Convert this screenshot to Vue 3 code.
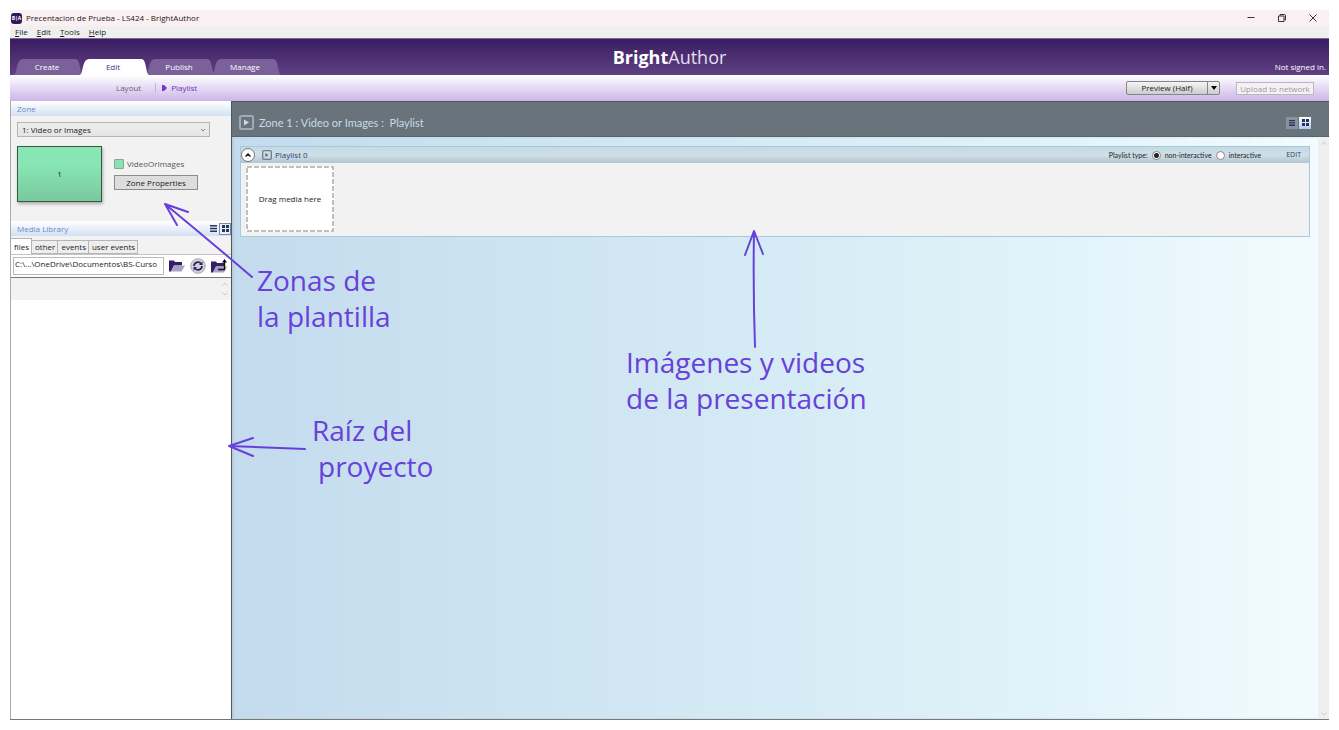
<script setup>
import { ref } from 'vue'

const menus = ['File', 'Edit', 'Tools', 'Help']
const tabs = ['Create', 'Edit', 'Publish', 'Manage']
const libraryTabs = ['files', 'other', 'events', 'user events']
const activeTab = ref('Edit')
const activeLibraryTab = ref('files')
const zone = ref('1')
const playlistType = ref('non-interactive')
const folder = ref('C:\\...\\OneDrive\\Documentos\\BS-Curso')
</script>

<template>
  <div class="page">
    <div class="window">
      <header class="titlebar">
        <span class="app-icon">B|A</span>
        <span class="title">Precentacion de Prueba - LS424 - BrightAuthor</span>
        <div class="window-buttons">
          <button type="button" aria-label="Minimize">
            <svg width="10" height="10" viewBox="0 0 10 10"><path d="M1.5 4.500h7" /></svg>
          </button>
          <button type="button" aria-label="Restore">
            <svg width="10" height="10" viewBox="0 0 10 10"><path d="M1.500 3h5.500v5.500H1.500zM3 2.800V1.500h4.200q1.300 0 1.300 1.300V7H7.300" /></svg>
          </button>
          <button type="button" aria-label="Close">
            <svg width="10" height="10" viewBox="0 0 10 10"><path d="M1.500 1.500l7 7M8.500 1.500l-7 7" /></svg>
          </button>
        </div>
      </header>

      <nav class="menubar" aria-label="Menu">
        <button v-for="menu in menus" :key="menu" type="button"><u>{{ menu[0] }}</u>{{ menu.slice(1) }}</button>
      </nav>

      <div class="banner">
        <nav class="tabs" aria-label="Sections">
          <button
            v-for="tab in tabs"
            :key="tab"
            type="button"
            :class="{ active: tab === activeTab }"
            @click="activeTab = tab"
          >
            <svg viewBox="0 0 70 16" preserveAspectRatio="none" aria-hidden="true">
              <path d="M0 16C3 16 3 11 4.500 6Q6 0 10 0H62Q65 0 66 4C67.500 9 68 16 70 16Z" />
            </svg>
            <span>{{ tab }}</span>
          </button>
        </nav>
        <h1 class="brand"><b>Bright</b>Author</h1>
        <span class="signed">Not signed in.</span>
      </div>

      <div class="toolbar">
        <a class="crumb" href="#layout">Layout</a>
        <a class="crumb current" href="#playlist">
          <svg width="5" height="6" viewBox="0 0 5 6"><path d="M0 0h2l3 3-3 3H0z" /></svg>
          Playlist
        </a>
        <div class="actions">
          <div class="split">
            <button type="button" class="preview">Preview (Half)</button>
            <button type="button" class="drop" aria-label="Preview options">
              <svg width="6" height="4" viewBox="0 0 6 4"><path d="M0 0h6L3 4z" /></svg>
            </button>
          </div>
          <button type="button" class="upload" disabled>Upload to network</button>
        </div>
      </div>

      <div class="workspace">
        <aside class="sidebar">
          <h2 class="panel-title">Zone</h2>
          <div class="zone-panel">
            <div class="select-wrap">
              <select v-model="zone" aria-label="Zone">
                <option value="1">1: Video or Images</option>
              </select>
              <svg width="6" height="4" viewBox="0 0 6 4"><path d="M1 1l2 2 2-2" /></svg>
            </div>
            <div class="zone-row">
              <div class="zone-preview">1</div>
              <div class="zone-info">
                <div class="legend"><i></i>VideoOrImages</div>
                <button type="button">Zone Properties</button>
              </div>
            </div>
          </div>

          <div class="panel-title library-title">
            <h2>Media Library</h2>
            <button type="button" class="view" aria-label="List view">
              <svg width="7" height="7" viewBox="0 0 7 7"><path d="M0 0h7v1.500H0zM0 2.700h7v1.500H0zM0 5.400h7v1.500H0z" /></svg>
            </button>
            <button type="button" class="view selected" aria-label="Grid view">
              <svg width="7" height="7" viewBox="0 0 7 7"><path d="M0 0h3v3H0zM4 0h3v3H4zM0 4h3v3H0zM4 4h3v3H4z" /></svg>
            </button>
          </div>
          <div class="library-tabs">
            <button
              v-for="tab in libraryTabs"
              :key="tab"
              type="button"
              :class="{ active: tab === activeLibraryTab }"
              @click="activeLibraryTab = tab"
            >{{ tab }}</button>
          </div>
          <div class="path-row">
            <input v-model="folder" type="text" aria-label="Folder" />
            <button type="button" aria-label="Open folder">
              <svg width="16" height="12" viewBox="0 0 16 12">
                <path fill="#352066" d="M0 11.500V.5h5l1 1.500h7v3.500H5L2 11.500z" />
                <path fill="#a9a0c8" d="M2 11.500L5 5.500h11l-3.500 6z" />
              </svg>
            </button>
            <button type="button" aria-label="Refresh">
              <svg width="16" height="16" viewBox="0 0 16 16">
                <circle cx="8" cy="8" r="7.300" fill="#d2d1d9" stroke="#aaa9b2" />
                <path fill="none" stroke="#352066" stroke-width="1.800" d="M4 8a4 4 0 0 1 7-2.500M12 8a4 4 0 0 1-7 2.500" />
                <path fill="#352066" d="M12.500 3.500V7H9zM3.500 12.500V9H7z" />
              </svg>
            </button>
            <button type="button" aria-label="Parent folder">
              <svg width="16" height="14" viewBox="0 0 16 14">
                <path fill="#352066" d="M0 13.500V2.500h5l1 1.500h7v3.500H5L2 13.500z" />
                <path fill="#a9a0c8" d="M2 13.500L5 7.500h11l-3 6z" />
                <path fill="none" stroke="#111" stroke-width="1.300" d="M7 10.500h6.500V2" />
                <path d="M11 3.500L13.500 0 16 3.500z" />
              </svg>
            </button>
          </div>
          <div class="mini-scroll">
            <svg width="6" height="4" viewBox="0 0 6 4"><path d="M.5 3.500l2.500-2.500 2.500 2.500" /></svg>
            <svg width="6" height="4" viewBox="0 0 6 4"><path d="M.5 .5l2.500 2.500 2.500-2.500" /></svg>
          </div>
          <div class="file-list"></div>
        </aside>

        <main class="main">
          <div class="main-head">
            <svg class="play" width="15" height="15" viewBox="0 0 15 15">
              <rect x="1" y="1" width="13" height="13" rx="1.500" /><path d="M5 4.500l5 3-5 3z" />
            </svg>
            <h2>Zone 1 : Video or Images :&nbsp; Playlist</h2>
            <div class="view-group">
              <button type="button" class="view" aria-label="Show as list">
                <svg width="6" height="6" viewBox="0 0 6 6"><path d="M0 0h6v1H0zM0 1.700h6v1H0zM0 3.400h6v1H0zM0 5h6v1H0z" /></svg>
              </button>
              <button type="button" class="view selected" aria-label="Show as grid">
                <svg width="7" height="7" viewBox="0 0 7 7"><path d="M0 0h3v3H0zM4 0h3v3H4zM0 4h3v3H0zM4 4h3v3H4z" /></svg>
              </button>
            </div>
          </div>

          <div class="canvas-row">
            <div class="canvas">
              <section class="playlist">
                <header class="playlist-head">
                  <button type="button" class="collapse" aria-label="Collapse">
                    <svg width="6" height="4" viewBox="0 0 6 4"><path d="M.5 3.500l2.500-2.500 2.500 2.500" /></svg>
                  </button>
                  <svg class="play small" width="10" height="10" viewBox="0 0 15 15">
                    <rect x="1" y="1" width="13" height="13" rx="1.500" /><path d="M5 4.500l5 3-5 3z" />
                  </svg>
                  <h3>Playlist 0</h3>
                  <div class="types" role="radiogroup" aria-labelledby="types-label">
                    <span id="types-label">Playlist type:</span>
                    <input id="non" v-model="playlistType" type="radio" value="non-interactive" />
                    <label for="non">non-interactive</label>
                    <input id="inter" v-model="playlistType" type="radio" value="interactive" />
                    <label for="inter">interactive</label>
                  </div>
                  <button type="button" class="edit">EDIT</button>
                </header>
                <div class="playlist-body">
                  <div class="dropzone">
                    <svg aria-hidden="true"><rect x="1" y="1" /></svg>
                    <span>Drag media here</span>
                  </div>
                </div>
              </section>
            </div>
            <div class="scrollbar">
              <svg width="6" height="4" viewBox="0 0 6 4"><path d="M.5 3.500l2.500-2.500 2.500 2.500" /></svg>
              <svg width="6" height="4" viewBox="0 0 6 4"><path d="M.5 .5l2.500 2.500 2.500-2.500" /></svg>
            </div>
          </div>
        </main>
      </div>
    </div>

    <svg class="arrows" aria-hidden="true">
      <path d="M252 277Q211 242 165 204M188 212L165 204L177 225" />
      <path d="M755 347Q753 290 754 232M745 255L754 231L763 254" />
      <path d="M305 449L229 446M253 438L229 446L253 456" />
    </svg>
    <p class="note zones">Zonas de<br />la plantilla</p>
    <p class="note media">Imágenes y videos<br />de la presentación</p>
    <p class="note root">Raíz del<br /><span>proyecto</span></p>
  </div>
</template>

<style>
body {
  margin: 0;
  background: #fff;
}
</style>

<style scoped>
* {
  box-sizing: border-box;
}
.page {
  position: relative;
  display: flex;
  min-height: 100vh;
  padding: 10px;
  font: 8px/12px "Segoe UI", "Open Sans", "Noto Sans", sans-serif;
  color: #222;
}
h1, h2, h3, p {
  margin: 0;
  font-size: inherit;
  font-weight: 400;
}
button, input, select {
  margin: 0;
  padding: 0;
  border: 0;
  background: none;
  font: inherit;
  color: inherit;
}
a {
  color: inherit;
  text-decoration: none;
}
svg {
  display: block;
  flex: none;
}
.window {
  flex: 1;
  min-width: 0;
  display: flex;
  flex-direction: column;
}

.titlebar {
  display: flex;
  align-items: center;
  height: 16px;
  background: #faeff1;
}
.app-icon {
  width: 11px;
  height: 11px;
  margin: 0 4px 0 1px;
  border-radius: 3px;
  background: #2c1a5c;
  color: #fff;
  font-size: 5px;
  font-weight: 700;
  line-height: 11px;
  text-align: center;
}
.window-buttons {
  display: flex;
  gap: 21px;
  margin-left: auto;
  padding-right: 11px;
}
.window-buttons path {
  fill: none;
  stroke: #333;
}
.menubar {
  display: flex;
  align-items: center;
  gap: 9px;
  height: 12px;
  padding-left: 5px;
  background: #efefef;
}

.banner {
  position: relative;
  display: flex;
  align-items: flex-end;
  height: 37px;
  border-top: 1px solid #7a6894;
  background: linear-gradient(#3a1d60, #5f4183);
}
.tabs {
  display: flex;
  padding-left: 4px;
}
.tabs button {
  position: relative;
  width: 66px;
  height: 16px;
  color: #fff;
}
.tabs svg {
  position: absolute;
  top: 0;
  left: -1px;
  width: 70px;
  height: 100%;
  fill: #7b6199;
}
.tabs span {
  position: relative;
}
.tabs .active {
  z-index: 1;
  color: #4d2a86;
}
.tabs .active svg {
  fill: #fff;
}
.brand {
  position: absolute;
  top: 5px;
  left: 0;
  right: 0;
  font-size: 18px;
  line-height: 26px;
  color: #e5dff0;
  text-align: center;
}
.brand b {
  color: #fff;
}
.signed {
  margin-left: auto;
  padding: 0 3px 2px 0;
  color: #fff;
}

.toolbar {
  display: flex;
  align-items: center;
  height: 26px;
  padding: 0 15px 0 106px;
  background: linear-gradient(#fff, #cbb5e8);
}
.crumb {
  color: #666;
}
.current {
  display: flex;
  align-items: center;
  gap: 4px;
  height: 10px;
  margin-left: 14px;
  padding-left: 6px;
  border-left: 1px solid #c7b0e6;
  color: #6c35b5;
}
.current svg {
  fill: #7636cf;
}
.actions {
  display: flex;
  align-items: center;
  gap: 16px;
  margin-left: auto;
}
.split {
  display: flex;
  height: 14px;
  border: 1px solid #858585;
  border-radius: 2px;
  background: linear-gradient(#f4f4f4, #cdcdcd);
}
.preview {
  width: 80px;
}
.drop {
  display: grid;
  place-items: center;
  width: 12px;
  border-left: 1px solid #858585;
}
.upload {
  width: 78px;
  height: 13px;
  border: 1px solid #b8b8b8;
  background: #f3f1f5;
  color: #999;
  line-height: 11px;
}

.workspace {
  flex: 1;
  display: flex;
  border-bottom: 1px solid #777;
}
.sidebar {
  display: flex;
  flex-direction: column;
  width: 221px;
  border-left: 1px solid #aaa;
  background: #f2f2f2;
}
.panel-title {
  height: 15px;
  padding-left: 6px;
  background: linear-gradient(#fff, #d3e1f1);
  color: #6788cd;
  line-height: 15px;
}
.zone-panel {
  height: 105px;
  padding: 6px;
}
.select-wrap {
  position: relative;
  width: 193px;
  height: 15px;
}
select {
  appearance: none;
  width: 100%;
  height: 100%;
  padding-left: 4px;
  border: 1px solid #b5b5b5;
  background: linear-gradient(#eee, #e4e4e4);
}
.select-wrap svg {
  position: absolute;
  top: 6px;
  right: 4px;
  fill: none;
  stroke: #888;
}
.zone-row {
  display: flex;
  gap: 12px;
  padding-top: 9px;
}
.zone-preview {
  width: 85px;
  height: 56px;
  border: 1px solid #395846;
  background: linear-gradient(#88e6b5 30%, #79c99d);
  box-shadow: 1px 2px 3px #aaa;
  line-height: 54px;
  text-align: center;
}
.zone-info {
  padding-top: 12px;
}
.legend {
  display: flex;
  align-items: center;
  gap: 3px;
  height: 12px;
  color: #555;
}
.legend i {
  width: 10px;
  height: 10px;
  border: 1px solid #8aa597;
  border-radius: 1px;
  background: #86e3b3;
}
.zone-info button {
  width: 84px;
  height: 15px;
  margin-top: 5px;
  border: 1px solid #8c8c8c;
  background: #ddd;
}
.library-title {
  display: flex;
  align-items: center;
}
.library-title h2 {
  flex: 1;
}
.view {
  display: grid;
  place-items: center;
  width: 12px;
  height: 12px;
}
.view svg {
  fill: #243562;
}
.library-title .selected {
  border: 1px solid #7a8aa8;
  background: #e9f0fa;
}
.library-tabs {
  display: flex;
  align-items: flex-end;
  height: 18px;
}
.library-tabs button {
  height: 14px;
  padding: 0 2px 0 3px;
  border: 1px solid #b5b5b5;
  border-left-width: 0;
  background: #eee;
  line-height: 12px;
}
.library-tabs .active {
  height: 16px;
  border-bottom: 0;
  background: #fff;
}
.path-row {
  display: flex;
  align-items: center;
  gap: 5px;
  height: 24px;
  padding: 0 4px 0 2px;
  border-top: 1px solid #c4c4c4;
  border-bottom: 1px solid #777;
  background: #fff;
}
.path-row input {
  flex: 1;
  min-width: 0;
  height: 18px;
  padding: 0 1px 5px;
  border: 1px solid #bbb;
  background: #fff;
}
.mini-scroll {
  display: flex;
  flex-direction: column;
  align-items: flex-end;
  justify-content: space-between;
  height: 22px;
  padding: 4px 3px;
}
.mini-scroll path, .scrollbar path {
  fill: none;
  stroke: #c8c8c8;
}
.file-list {
  flex: 1;
  background: #fff;
}

.main {
  flex: 1;
  min-width: 0;
  display: flex;
  flex-direction: column;
  border-left: 1px solid #4c5960;
}
.main-head {
  display: flex;
  align-items: center;
  gap: 5px;
  height: 36px;
  padding: 7px 18px 0 7px;
  border-top: 1px solid #56535f;
  border-bottom: 1px dotted #48565e;
  background: #69737b;
  color: #c5dcea;
}
.main-head h2 {
  flex: 1;
  font-family: "Segoe UI", Lato, sans-serif;
  font-size: 11px;
  line-height: 15px;
}
.play {
  fill: #c5dcea;
  stroke: none;
}
.play rect {
  fill: none;
  stroke: #9cabb6;
  stroke-width: 2;
}
.small {
  fill: #65727f;
}
.small rect {
  stroke: #71808d;
}
.view-group {
  display: flex;
  gap: 1px;
}
.view-group .view {
  background: #8793a1;
}
.view-group .selected {
  background: linear-gradient(#fff, #b2c8ed);
}
.canvas-row {
  flex: 1;
  display: flex;
}
.canvas {
  flex: 1;
  padding: 9px 8px;
  background: linear-gradient(90deg, #c4dbee, #d5ebf5 50%, #e2f4fa 78%, #f3fbff);
  box-shadow: inset 2px 0 2px #b7ccda;
}
.scrollbar {
  display: flex;
  flex-direction: column;
  align-items: center;
  justify-content: space-between;
  width: 11px;
  padding: 4px 0 3px;
  background: #efefef;
}
.playlist {
  border: 1px solid #a6c9dc;
  background: #f2f2f2;
}
.playlist-head {
  display: flex;
  align-items: center;
  gap: 3px;
  height: 16px;
  padding: 0 8px 0 0;
  background: linear-gradient(#c4dae5, #d0dfe7 50%, #b0c6d2);
}
.collapse {
  display: grid;
  place-items: center;
  width: 14px;
  height: 14px;
  margin-right: 4px;
  border: 1px solid #777;
  border-radius: 50%;
  background: #fff;
}
.collapse path {
  fill: none;
  stroke: #222;
  stroke-width: 1.5;
}
.playlist-head h3 {
  flex: 1;
  color: #263f78;
}
.types {
  display: flex;
  align-items: center;
  font-family: "Segoe UI", Lato, sans-serif;
  font-size: 7px;
}
.types input {
  appearance: none;
  width: 9px;
  height: 9px;
  margin: 0 4px;
  border: 1px solid #888;
  border-radius: 50%;
  background: #fff;
}
.types input:checked {
  background: radial-gradient(#222 0 2px, #fff 3px);
}
.edit {
  margin-left: 22px;
  color: #263f78;
  font-size: 7px;
}
.playlist-body {
  height: 73px;
  padding: 3px 5px;
}
.dropzone {
  position: relative;
  display: grid;
  place-items: center;
  width: 88px;
  height: 66px;
  background: #fff;
}
.dropzone svg {
  position: absolute;
  inset: 0;
  width: 100%;
  height: 100%;
}
.dropzone rect {
  width: calc(100% - 2px);
  height: calc(100% - 2px);
  fill: none;
  stroke: #aaa;
  stroke-width: 1.5;
  stroke-dasharray: 5 2;
}

.arrows {
  position: absolute;
  inset: 0;
  width: 100%;
  height: 100%;
  pointer-events: none;
}
.arrows path {
  fill: none;
  stroke: #6741d9;
  stroke-width: 2;
  stroke-linecap: round;
  stroke-linejoin: round;
}
.note {
  position: absolute;
  color: #6741d9;
  font-family: Virgil, Excalifont, "Comic Sans MS", "Open Sans", sans-serif;
  font-size: 28px;
  line-height: 36px;
  white-space: nowrap;
}
.zones {
  top: 262px;
  left: 257px;
}
.media {
  top: 344px;
  left: 626px;
}
.root {
  top: 412px;
  left: 312px;
}
.root span {
  padding-left: 6px;
}
</style>
